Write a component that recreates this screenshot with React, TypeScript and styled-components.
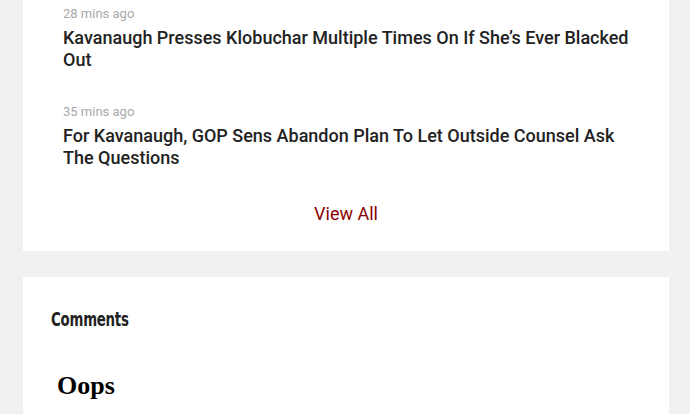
import React from 'react'
import styled, { createGlobalStyle } from 'styled-components'

const GlobalStyle = createGlobalStyle`
  body {
    margin: 0;
    background: #f1f1f1;
    font-family: Roboto, 'Liberation Sans', sans-serif;
  }
`

const Page = styled.div`
  display: flex;
  flex-direction: column;
  gap: 26px;
  padding: 0 21px 0 23px;
`

const Card = styled.section<{ $pad: string }>`
  background: #fff;
  padding: ${(p) => p.$pad};
  display: flex;
  flex-direction: column;
`

const NewsItem = styled.article`
  display: flex;
  flex-direction: column;
  gap: 5px;
  & + & {
    margin-top: 33px;
  }
`

const Time = styled.span`
  font-size: 13px;
  line-height: 16px;
  color: #a9a9a9;
`

const Headline = styled.h3`
  margin: 0;
  font-size: 18px;
  line-height: 22px;
  font-weight: 500;
  color: #222;
`

const ViewAll = styled.a`
  align-self: center;
  margin-top: 34px;
  font-size: 18px;
  line-height: 21px;
  color: #8b0000;
  text-decoration: none;
`

const Heading = styled.h2`
  margin: 0;
  align-self: flex-start;
  font-family: 'DejaVu Sans Condensed', 'DejaVu Sans', sans-serif;
  font-weight: 700;
  font-size: 19px;
  line-height: 24px;
  letter-spacing: -0.3px;
  color: #222;
  transform: scaleX(0.78);
  transform-origin: left center;
`

const Oops = styled.h1`
  margin: 40px 0 0 6px;
  font-family: 'Liberation Serif', serif;
  font-weight: 700;
  font-size: 26px;
  line-height: 30px;
  color: #000;
`

const news = [
  { time: '28 mins ago', title: 'Kavanaugh Presses Klobuchar Multiple Times On If She’s Ever Blacked Out' },
  { time: '35 mins ago', title: 'For Kavanaugh, GOP Sens Abandon Plan To Let Outside Counsel Ask The Questions' },
]

export default function App() {
  return (
    <>
      <GlobalStyle />
      <Page>
        <Card $pad='6px 40px 27px'>
          {news.map((n) => (
            <NewsItem key={n.time}>
              <Time>{n.time}</Time>
              <Headline>{n.title}</Headline>
            </NewsItem>
          ))}
          <ViewAll href='#'>View All</ViewAll>
        </Card>
        <Card $pad='30px 28px 40px'>
          <Heading>Comments</Heading>
          <Oops>Oops</Oops>
        </Card>
      </Page>
    </>
  )
}
